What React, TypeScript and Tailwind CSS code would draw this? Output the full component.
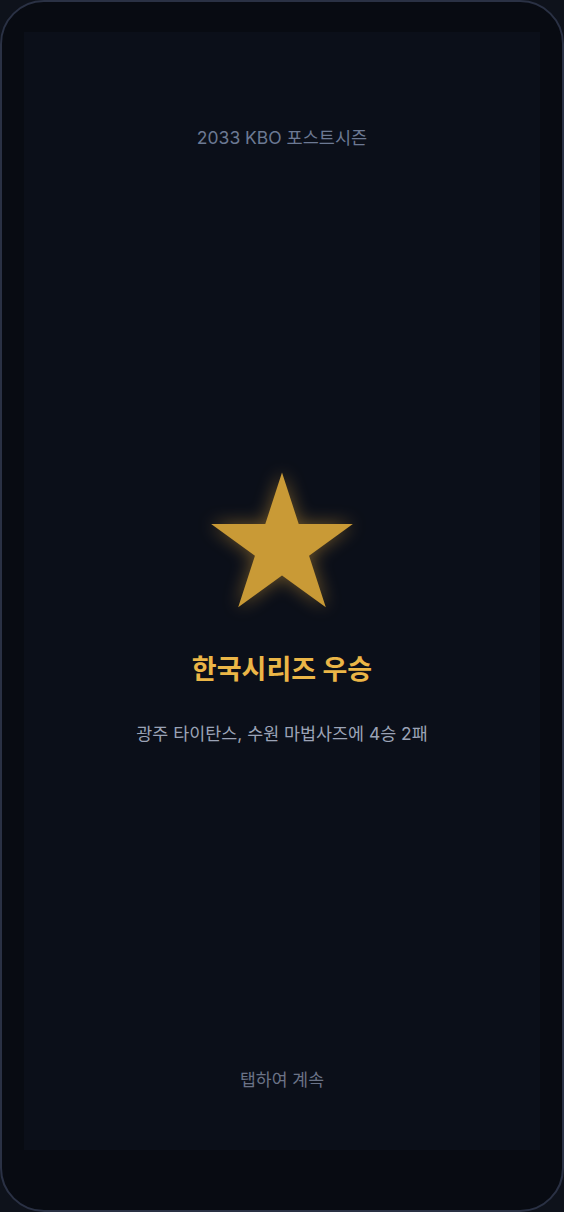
export default function App() {
  return (
    <div
      className="w-[564px] h-[1212px] bg-[#0e121b]"
      style={{ fontFamily: 'Inter, "Noto Sans CJK KR", sans-serif' }}
    >
      <div className="h-full rounded-[44px] border-2 border-[#2a3144] bg-[#080b12] px-[22px] pt-[30px] pb-[60px]">
        <div className="flex h-full flex-col items-center bg-[#0b0f19] pt-[94px] pb-[58px]">
          <p className="text-[17.5px] leading-6 text-[#6c7993]">2033 KBO 포스트시즌</p>

          <div className="flex flex-1 flex-col items-center justify-center">
            <svg
              width="150"
              height="136"
              viewBox="0 0 150 136"
              className="drop-shadow-[0_0_9px_rgba(232,170,60,0.45)]"
            >
              <polygon
                fill="#c99a36"
                points="75,0.5 91.73,51.98 145.85,51.98 102.07,83.79 118.79,135.27 75,103.46 31.21,135.27 47.93,83.79 4.15,51.98 58.27,51.98"
              />
            </svg>
            <h1 className="mt-[46px] text-[27px] leading-8 font-bold text-[#ebb647]">한국시리즈 우승</h1>
            <p className="mt-9 text-[17.4px] leading-6 text-[#9ba3b6]">광주 타이탄스, 수원 마법사즈에 4승 2패</p>
          </div>

          <p className="text-[17.2px] leading-6 text-[#6b7387]">탭하여 계속</p>
        </div>
      </div>
    </div>
  );
}
